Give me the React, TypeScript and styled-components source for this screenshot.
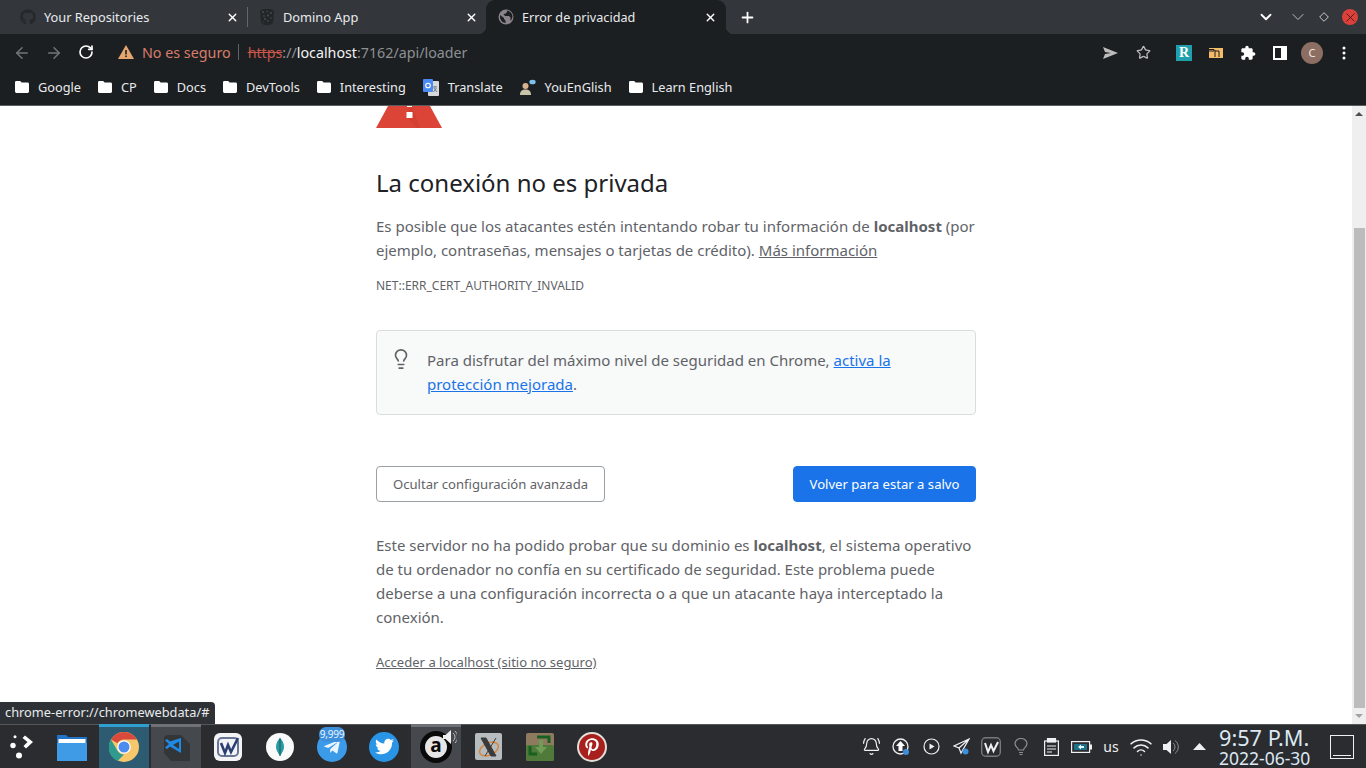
import React from 'react';
import styled, { createGlobalStyle } from 'styled-components';
import { ArrowLeft, ArrowRight, RotateCw, Star, X, Plus, ChevronDown, Lightbulb, BellRing, Wifi } from 'lucide-react';
import { FaGithub, FaTwitter, FaPinterestP, FaTelegramPlane } from 'react-icons/fa';

const Global = createGlobalStyle`
  html, body { margin: 0; padding: 0; overflow: hidden; background: #fff; }
  * { box-sizing: border-box; }
  body { font-family: "Noto Sans", "Open Sans", sans-serif; }
`;

const Screen = styled.div`
  position: relative; width: 1366px; height: 768px; display: flex; flex-direction: column; overflow: hidden;
`;
const TabStrip = styled.div`
  height: 34px; background: #33373c; display: flex; align-items: stretch; flex: none; color: #e8eaed;
`;
const Tab = styled.div<{ $active?: boolean; $width: number; $flush?: boolean }>`
  position: relative; width: ${p => p.$width}px; display: flex; align-items: center; padding-left: ${p => p.$flush ? 0 : 20}px; font-size: ${p => p.$active ? 12.65 : 12.8}px;
  ${p => p.$active ? `
    background: #1c1f21; border-radius: 9px 9px 0 0; padding-left: 12px;
    &::before, &::after { content: ''; position: absolute; bottom: 0; width: 8px; height: 8px; background: radial-gradient(circle at var(--c), transparent 8px, #1c1f21 8.5px); }
    &::before { left: -8px; --c: 0 0; }
    &::after { right: -8px; --c: 100% 0; }
  ` : ''}
`;
const TabDivider = styled.div`
  width: 1px; height: 20px; background: #62666b; align-self: center; margin: 0 11px 0 0; flex: none;
`;
const TabTitle = styled.span`
  margin-left: 8px; flex: 1; white-space: nowrap;
`;
const TabClose = styled.span<{ $right?: number }>`
  display: flex; margin-right: ${p => p.$right ?? 8}px; color: #fff;
`;
const NewTab = styled.div`
  display: flex; align-items: center; margin-left: 13px; color: #fff;
`;
const WindowControls = styled.div`
  margin-left: auto; display: flex; align-items: center;
`;
const WinButton = styled.span<{ $w: number }>`
  display: flex; width: ${p => p.$w}px; justify-content: center; align-items: center;
`;
const CloseCircle = styled.span`
  width: 16px; height: 16px; border-radius: 50%; background: #d9413a; display: flex; align-items: center; justify-content: center; color: #2c1210;
`;
const Toolbar = styled.div`
  height: 36px; background: #1c1f21; display: flex; align-items: center; flex: none; position: relative;
`;
const NavSlot = styled.span<{ $w: number; $color: string }>`
  width: ${p => p.$w}px; display: flex; justify-content: center; color: ${p => p.$color}; flex: none;
`;
const NavRow = styled.div`
  display: flex; padding: 1px 0 0 6px; width: 118px; flex: none;
`;
const Warn = styled.span`
  display: flex; width: 16px; flex: none;
`;
const SecurityText = styled.span`
  margin-left: 8px; color: #d87c6b; font-size: 14.3px; white-space: nowrap;
`;
const UrlDivider = styled.span`
  width: 1px; height: 16px; background: #5f6368; margin: 0 9px 0 7px; flex: none;
`;
const Url = styled.span`
  font-size: 14.25px; color: #8d9094; white-space: nowrap;
`;
const Strike = styled.span`
  color: #c9564a; text-decoration: line-through;
`;
const Host = styled.span`
  color: #f1f3f4;
`;
const ToolRight = styled.div`
  margin-left: auto; display: flex; align-items: center; padding: 1px 6px 0 0;
`;
const ToolSlot = styled.span<{ $w: number }>`
  width: ${p => p.$w}px; display: flex; justify-content: center; align-items: center; color: #fff; flex: none;
`;
const ToolGap = styled.span`
  width: 8px; flex: none;
`;
const RBadge = styled.span`
  width: 16px; height: 16px; background: #20a0ad; color: #fff; font: 700 14px/16px "Liberation Serif", serif; text-align: center;
`;
const Avatar = styled.span`
  width: 22px; height: 22px; border-radius: 50%; background: #8d6e63; color: #f3e9e5; font-size: 11px; display: flex; align-items: center; justify-content: center;
`;
const Bookmarks = styled.div`
  height: 36px; background: #1c1f21; border-bottom: 1px solid #5a5c5e; padding: 0 0 1px 15px; display: flex; align-items: center; gap: 17px; flex: none; color: #e8eaed; font-size: 12.75px;
`;
const Bookmark = styled.span`
  display: flex; align-items: center; gap: 9px; white-space: nowrap;
`;
const Body = styled.div`
  flex: 1; display: flex; min-height: 0; background: #fff;
`;
const Page = styled.main`
  flex: 1; overflow: hidden; padding-left: 376px;
`;
const Content = styled.div`
  width: 600px; color: #5f6368; font-size: 15px; line-height: 24px;
`;
const ErrorIcon = styled.svg`
  display: block; width: 66px; height: 22px;
`;
const Heading = styled.h1`
  margin: 37px 0 0; font-size: 24px; line-height: 36px; font-weight: 400; color: #202124;
`;
const Para = styled.p<{ $top: number }>`
  margin: ${p => p.$top}px 0 0; white-space: nowrap;
`;
const Strong = styled.b`
  font-weight: 700;
`;
const DarkLink = styled.a`
  color: #5f6368; text-decoration: underline;
`;
const Code = styled.div`
  margin-top: 12px; font-size: 12px; line-height: 24px; color: #5f6368;
`;
const Callout = styled.div`
  margin-top: 32px; height: 85px; border: 1px solid #dadce0; border-radius: 4px; background: #f8f9f9; padding: 17px 0 0 50px; position: relative; white-space: nowrap;
`;
const CalloutIcon = styled.span`
  position: absolute; left: 13px; top: 17px; display: flex; color: #5f6368;
`;
const BlueLink = styled.a`
  color: #1a73e8; text-decoration: underline;
`;
const Buttons = styled.div`
  margin-top: 51px; display: flex; justify-content: space-between;
`;
const Button = styled.div<{ $primary?: boolean }>`
  height: 36px; border-radius: 4px; font-size: 13.1px; display: flex; align-items: center; justify-content: center;
  width: ${p => p.$primary ? 183 : 229}px;
  padding-bottom: ${p => p.$primary ? 1 : 0}px;
  background: ${p => p.$primary ? '#1a73e8' : '#fff'};
  color: ${p => p.$primary ? '#fff' : '#5f6368'};
  border: 1px solid ${p => p.$primary ? '#1a73e8' : '#9aa0a6'};
`;
const ProceedLink = styled.a`
  display: block; margin-top: 21px; font-size: 13.05px; line-height: 24px; color: #5f6368; text-decoration: underline;
`;
const Scrollbar = styled.div`
  width: 14px; flex: none; background: #efefef; display: flex; flex-direction: column; align-items: center; padding: 0 1px;
`;
const ScrollUp = styled.span`
  width: 0; height: 0; border-left: 4px solid transparent; border-right: 4px solid transparent; border-bottom: 4px solid #505050; margin: 6px 0 112px;
`;
const ScrollThumb = styled.div`
  width: 11px; height: 480px; background: #bcbcbc;
`;
const ScrollDown = styled.span`
  width: 0; height: 0; border-left: 4px solid transparent; border-right: 4px solid transparent; border-top: 4px solid #a3a3a3; margin-top: 6px;
`;
const StatusBubble = styled.div`
  position: absolute; left: 0; top: 702px; width: 215px; height: 22px; background: #2e3236; color: #e8eaed; border-radius: 0 4px 0 0; font-size: 12.8px; line-height: 21px; padding-left: 5px; white-space: nowrap;
`;
const Taskbar = styled.footer`
  height: 44px; flex: none; background: #2b2c30; border-top: 1px solid #55575a; display: flex; align-items: stretch; color: #eff0f1;
`;
const TaskItem = styled.div<{ $state?: 'focus' | 'open'; $w?: number }>`
  width: ${p => p.$w ?? 52}px; ${p => p.$w ? 'padding-right: 4px;' : ''} flex: none; display: flex; align-items: center; justify-content: center; position: relative;
  ${p => p.$state === 'focus' ? `background: linear-gradient(#2d5c72, #2d5c72) 1px 0/50px 100% no-repeat;
    &::before { content:''; position:absolute; left:1px; width:50px; top:-1px; height:3px; background:#2e9fd0; }` : ''}
  ${p => p.$state === 'open' ? `background: linear-gradient(#45484c, #45484c) 1px 0/50px 100% no-repeat;
    &::before { content:''; position:absolute; left:1px; width:50px; top:-1px; height:3px; background:#6e7175; }` : ''}
`;
const CountBadge = styled.span`
  position: absolute; left: 13px; top: 2px; height: 15px; width: 26px; border-radius: 7px; background: #3d8fdc; color: #eaf4fc; font-size: 10px; line-height: 14px; text-align: center; letter-spacing: -.2px;
`;
const AudioDisc = styled.span`
  width: 32px; height: 32px; border-radius: 50%; border: 5px solid #0a0a0a; background: #e6e6e6; color: #0a0a0a; font-size: 19px; font-weight: 700; line-height: 19px; display: flex; align-items: center; justify-content: center; padding-bottom: 2px;
`;
const AudioSpeaker = styled.span`
  position: absolute; left: 33px; top: 5px; display: flex;
`;
const Tray = styled.div`
  margin-left: auto; display: flex; align-items: center;
`;
const TraySlot = styled.span<{ $w?: number }>`
  width: ${p => p.$w ?? 30}px; display: flex; justify-content: center; align-items: center; flex: none; font-size: 14px; color: #eff0f1;
`;
const Clock = styled.div`
  width: 118px; padding-left: 7px; display: flex; flex-direction: column; align-items: flex-start; white-space: nowrap; color: #dce8f2;
`;
const ClockTime = styled.span`
  font-size: 21.7px; line-height: 22px;
`;
const ClockDate = styled.span`
  font-size: 17.5px; line-height: 18px;
`;
const ShowDesktop = styled.div`
  width: 24px; height: 24px; border: 1px solid #eff0f1; margin-right: 12px; position: relative; align-self: center;
  &::after { content: ''; position: absolute; left: 2px; right: 2px; bottom: 2px; height: 1px; background: #eff0f1; }
`;
const CircleIcon = styled.span<{ $bg: string; $border?: string }>`
  width: 30px; height: 30px; border-radius: 50%; background: ${p => p.$bg}; display: flex; align-items: center; justify-content: center; ${p => p.$border ? `border: 2px solid ${p.$border};` : ''}
`;

const Folder = () => (
  <svg width="14" height="12" viewBox="0 0 14 12"><path d="M1.4 0H5.2L6.6 1.6H12.6A1.4 1.4 0 0 1 14 3V10.6A1.4 1.4 0 0 1 12.6 12H1.4A1.4 1.4 0 0 1 0 10.6V1.4A1.4 1.4 0 0 1 1.4 0Z" fill="#fff" /></svg>
);
const Globe = () => (
  <svg width="16" height="16" viewBox="0 0 16 16"><circle cx="8" cy="8" r="7.5" fill="#8a8488" /><path d="M2 6l4 3 0 1 1.5 1.5V14C5 14 2 11 2 8zM9.5 1.5L8 4.5 5.5 5 7 7h4l1.5 1.5v3.5C14 10 15 8 14 5.5 13 3 11 2 9.5 1.5z" fill="#1c1f21" /></svg>
);
const Domino = () => (
  <svg width="16" height="16" viewBox="0 0 16 16"><path d="M1 2l3-2h8l3 2-1 12-3 2H5l-3-2z" fill="#232629" /><g fill="#4e5154"><circle cx="4" cy="3" r=".9" /><circle cx="8" cy="2.500" r=".7" /><circle cx="12" cy="4" r=".9" /><circle cx="5" cy="7" r=".8" /><circle cx="9" cy="6.500" r=".9" /><circle cx="12" cy="9" r=".7" /><circle cx="6" cy="10" r=".9" /><circle cx="9" cy="12" r=".8" /><circle cx="4" cy="13" r=".6" /></g></svg>
);
const Warning = () => (
  <svg width="16" height="14" viewBox="0 0 16 14"><path d="M8 0l8 14H0z" fill="#e6a66f" /><rect x="7.2" y="5" width="1.6" height="4.5" fill="#1c1f21" /><rect x="7.2" y="10.5" width="1.6" height="1.6" fill="#1c1f21" /></svg>
);
const TranslateIcon = () => (
  <svg width="16" height="17" viewBox="0 0 16 17"><rect x="5" y="2" width="11" height="15" rx="1" fill="#d6d8da" /><rect width="10" height="13" rx="1" fill="#4a8af4" /><circle cx="5" cy="6.5" r="2.3" fill="none" stroke="#fff" strokeWidth="1.1" /><path d="M10 8h4M12 7v1M10.5 13l3-4M11 9l3 4" stroke="#6b6f73" strokeWidth=".9" /></svg>
);
const YouEnGlishIcon = () => (
  <svg width="16" height="17" viewBox="0 0 16 17"><circle cx="5.5" cy="7" r="3" fill="#d8b48c" /><path d="M0 16c0-4 2-5.500 5.500-5.500S11 12 11 16z" fill="#c9c3a8" /><ellipse cx="12.500" cy="3" rx="3.200" ry="2.300" fill="#7cc0ec" /></svg>
);
const SendArrow = () => (
  <svg width="15" height="12" viewBox="0 0 15 12"><path d="M0 0l15 6L0 12l2-5 6-1-6-1z" fill="#bdbdbd" /></svg>
);
const Puzzle = () => (
  <svg width="16" height="16" viewBox="0 0 24 24"><path d="M20.500 11H19V7c0-1.100-.9-2-2-2h-4V3.500C13 2.120 11.880 1 10.500 1S8 2.120 8 3.500V5H4c-1.100 0-1.990.9-1.990 2v3.800H3.500c1.490 0 2.700 1.210 2.700 2.700s-1.210 2.700-2.700 2.700H2V20c0 1.100.9 2 2 2h3.800v-1.500c0-1.490 1.210-2.700 2.700-2.700 1.490 0 2.700 1.210 2.700 2.700V22H17c1.100 0 2-.9 2-2v-4h1.500c1.380 0 2.500-1.120 2.500-2.500S21.880 11 20.500 11z" fill="#fff" /></svg>
);
const SidePanel = () => (
  <svg width="14" height="14" viewBox="0 0 14 14"><rect width="14" height="14" fill="#fff" /><rect x="2" y="2" width="6" height="10" fill="#1c1f21" /></svg>
);
const Keep = () => (
  <svg width="14" height="10" viewBox="0 0 14 10"><rect width="14" height="10" fill="#f5bb69" /><path d="M0 1.500h5V3H0M6 2v7M6 3h4v6" stroke="#1c1f21" strokeWidth="1" fill="none" /></svg>
);
const Dots = () => (
  <svg width="4" height="14" viewBox="0 0 4 14"><circle cx="2" cy="2" r="1.500" fill="#fff" /><circle cx="2" cy="7" r="1.500" fill="#fff" /><circle cx="2" cy="12" r="1.500" fill="#fff" /></svg>
);
const Diamond = () => (
  <svg width="10" height="10" viewBox="0 0 10 10"><path d="M5 .7L9.300 5 5 9.300.7 5z" fill="none" stroke="#c8c9ca" strokeWidth="1" /></svg>
);
const Launcher = () => (
  <svg width="24" height="24" viewBox="0 0 24 24" fill="#fff"><path d="M16 .5l8 6.500-7 6.500-2.500-2.500 4-4-5-4z" /><circle cx="6" cy="1.800" r="1.500" /><circle cx="4" cy="10.500" r="2.700" /><circle cx="10" cy="20.500" r="3" /></svg>
);
const Files = () => (
  <svg width="30" height="28" viewBox="0 0 30 28"><path d="M0 2h9l2 2h19v24H0z" fill="#2274c9" /><rect x="1.500" y="6" width="27" height="4" fill="#fff" /><rect x="0" y="10" width="30" height="18" fill="#3f9be6" /></svg>
);
const Chrome = () => (
  <svg width="30" height="30" viewBox="0 0 30 30">
    <circle cx="15" cy="15" r="15" fill="#f6c86b" />
    <path d="M15 0A15 15 0 0 1 28 7.500H15A7.500 7.500 0 0 0 8.500 11.200L2 7.500A15 15 0 0 1 15 0Z" fill="#d9493c" />
    <path d="M2 7.500L8.500 18.800A7.500 7.500 0 0 0 15 22.500L8.500 29A15 15 0 0 1 2 7.500Z" fill="#2f9b8f" />
    <circle cx="15" cy="15" r="6.800" fill="#fff" /><circle cx="15" cy="15" r="5.500" fill="#4c8bf0" />
  </svg>
);
const VSCode = () => (
  <svg width="28" height="28" viewBox="0 0 28 28"><path d="M5 2h14l9 9v17H9L2 20V4z" fill="#333639" /><path d="M19 5v15L8 13.500l-3 2.500-2-1.500 4-3.500-4-3.500 2-1.500 3 2.500zM17 8.500L11 12l6 4z" fill="#1f8ae6" /></svg>
);
const Wps = () => (
  <svg width="28" height="28" viewBox="0 0 28 28"><rect width="28" height="28" rx="6" fill="#f4f4f6" /><rect x="4" y="5" width="20" height="18" rx="4" fill="none" stroke="#6a7794" strokeWidth="2" /><path d="M7 10l4 10 3-8 3 7 7-14" fill="none" stroke="#2c3f73" strokeWidth="2.600" /></svg>
);
const Mongo = () => (
  <svg width="28" height="28" viewBox="0 0 28 28"><circle cx="14" cy="14" r="14" fill="#fafafa" /><path d="M14 5c3 3 4 6 4 9s-2 6-4 9c-2-3-4-6-4-9s1-6 4-9z" fill="#2a9aa0" /><path d="M14 5v18" stroke="#0f5f65" /></svg>
);
const Speaker = () => (
  <svg width="14" height="14" viewBox="0 0 14 14"><path d="M0 5h2.500L8 0v14L2.500 9H0z" fill="#f0f0f0" /><path d="M10 3a5 5 0 0 1 0 8M12 1a8 8 0 0 1 0 12" fill="none" stroke="#bbb" /></svg>
);
const XIcon = () => (
  <svg width="27" height="27" viewBox="0 0 27 27"><rect width="27" height="27" rx="2" fill="#b7bcbe" /><ellipse cx="14" cy="16" rx="10" ry="6" fill="none" stroke="#d9853d" strokeWidth="1.500" transform="rotate(-25 14 16)" /><path d="M6 5h5l10 18h-5zM21 5L10 23" fill="#3a3a3a" stroke="#3a3a3a" /></svg>
);
const Uget = () => (
  <svg width="28" height="28" viewBox="0 0 28 28"><rect width="28" height="28" rx="2" fill="#8f7a5f" /><rect y="12" width="28" height="16" rx="2" fill="#4f7a3a" /><path d="M4 13v8h7M11 4h12v6" stroke="#176020" strokeWidth="3" fill="none" /><path d="M13 7h4v7h4l-6 7-6-7h4z" fill="#709c58" /></svg>
);
const Bulb = () => (
  <svg width="14" height="18" viewBox="0 0 14 18" fill="none" stroke="#8c8e91" strokeWidth="1.200"><path d="M4.500 12c0-2-3.500-3-3.500-6.500a6 5 0 0 1 12 0c0 3.500-3.500 4.500-3.500 6.500z" /><path d="M5 14.500h4M5.500 16.500h3" /></svg>
);
const Upload = () => (
  <svg width="20" height="20" viewBox="0 0 20 20"><circle cx="9.500" cy="9.500" r="7.500" fill="none" stroke="#eff0f1" strokeWidth="1.300" /><path d="M9.500 4l4.500 5h-2.500v5h-4V9H5z" fill="#fff" /><circle cx="15" cy="15" r="3" fill="#3d8fdc" /></svg>
);
const PlayCircle = () => (
  <svg width="17" height="17" viewBox="0 0 17 17"><circle cx="8.500" cy="8.500" r="7.500" fill="none" stroke="#eff0f1" strokeWidth="1.200" /><path d="M6.500 5.500l5 3-5 3z" fill="#eff0f1" /></svg>
);
const PaperPlane = () => (
  <svg width="17" height="17" viewBox="0 0 17 17"><path d="M16 1L1 8l5 2 2 5zM6 10L16 1" fill="none" stroke="#eff0f1" strokeWidth="1.200" /><circle cx="12.500" cy="13.500" r="3" fill="#3d8fdc" /></svg>
);
const TrayCheck = () => (
  <svg width="20" height="20" viewBox="0 0 20 20"><rect x=".7" y=".7" width="18.600" height="18.600" rx="4" fill="none" stroke="#77797c" strokeWidth="1.400" /><path d="M4 6l3 9 3-7 2.500 6L17 5" fill="none" stroke="#eff0f1" strokeWidth="2" /></svg>
);
const ClipboardIcon = () => (
  <svg width="15" height="18" viewBox="0 0 15 18" fill="none" stroke="#eff0f1" strokeWidth="1.200"><rect x=".6" y="3" width="13.800" height="14.400" /><rect x="3.500" y=".5" width="8" height="3.500" fill="#eff0f1" /><path d="M3 8h9M3 11h9M3 14h5" /></svg>
);
const Battery = () => (
  <svg width="21" height="12" viewBox="0 0 21 12"><rect x=".6" y=".6" width="18" height="10.800" fill="none" stroke="#eff0f1" strokeWidth="1.200" /><rect x="19" y="3.500" width="2" height="5" fill="#eff0f1" /><rect x="3" y="3" width="13" height="6" fill="#1f6f86" /><path d="M7 6l3-2.500V5h3v2h-3v1.500z" fill="#dff" /></svg>
);
const Volume = () => (
  <svg width="17" height="16" viewBox="0 0 17 16"><path d="M0 5h3.500L8 1v14l-4.500-4H0z" fill="#eff0f1" /><path d="M10 4a5 5 0 0 1 0 8M12 1.500a8 8 0 0 1 0 13" fill="none" stroke="#8c8e91" /></svg>
);
const Triangle = () => (
  <svg width="13" height="7" viewBox="0 0 13 7"><path d="M6.500 0L13 7H0z" fill="#eff0f1" /></svg>
);

export default function App() {
  return (
    <Screen>
      <Global />
      <TabStrip>
        <Tab $width={247}>
          <FaGithub size={16} color="#26292c" />
          <TabTitle>Your Repositories</TabTitle>
          <TabClose><X size={13} strokeWidth={2.500} /></TabClose>
        </Tab>
        <TabDivider />
        <Tab $width={227} $flush>
          <Domino />
          <TabTitle>Domino App</TabTitle>
          <TabClose><X size={13} strokeWidth={2.500} /></TabClose>
        </Tab>
        <Tab $width={240} $active>
          <Globe />
          <TabTitle>Error de privacidad</TabTitle>
          <TabClose $right={9}><X size={13} strokeWidth={2.500} /></TabClose>
        </Tab>
        <NewTab><Plus size={17} strokeWidth={2.500} /></NewTab>
        <WindowControls>
          <WinButton $w={32}><ChevronDown size={18} color="#fff" strokeWidth={2.400} /></WinButton>
          <WinButton $w={32}><ChevronDown size={20} color="#c8c9ca" strokeWidth={1.100} /></WinButton>
          <WinButton $w={20}><Diamond /></WinButton>
          <WinButton $w={32}><CloseCircle><X size={15} strokeWidth={1.200} /></CloseCircle></WinButton>
        </WindowControls>
      </TabStrip>
      <Toolbar>
        <NavRow>
          <NavSlot $w={32} $color="#72757a"><ArrowLeft size={18} strokeWidth={2} /></NavSlot>
          <NavSlot $w={32} $color="#72757a"><ArrowRight size={18} strokeWidth={2} /></NavSlot>
          <NavSlot $w={32} $color="#fff"><RotateCw size={16} strokeWidth={2.500} /></NavSlot>
        </NavRow>
        <Warn><Warning /></Warn>
        <SecurityText>No es seguro</SecurityText>
        <UrlDivider />
        <Url><Strike>https</Strike>://<Host>localhost</Host>:7162/api/loader</Url>
        <ToolRight>
          <ToolSlot $w={33}><SendArrow /></ToolSlot>
          <ToolSlot $w={33}><Star size={15} color="#bdbdbd" strokeWidth={2} /></ToolSlot>
          <ToolGap />
          <ToolSlot $w={32}><RBadge>R</RBadge></ToolSlot>
          <ToolSlot $w={32}><Keep /></ToolSlot>
          <ToolSlot $w={32}><Puzzle /></ToolSlot>
          <ToolSlot $w={32}><SidePanel /></ToolSlot>
          <ToolSlot $w={32}><Avatar>C</Avatar></ToolSlot>
          <ToolSlot $w={32}><Dots /></ToolSlot>
        </ToolRight>
      </Toolbar>
      <Bookmarks>
        {['Google', 'CP', 'Docs', 'DevTools', 'Interesting'].map(n => (
          <Bookmark key={n}><Folder />{n}</Bookmark>
        ))}
        <Bookmark><TranslateIcon />Translate</Bookmark>
        <Bookmark><YouEnGlishIcon />YouEnGlish</Bookmark>
        <Bookmark><Folder />Learn English</Bookmark>
      </Bookmarks>
      <Body>
        <Page>
          <Content>
            <ErrorIcon viewBox="0 0 66 22">
              <path d="M12 0H54L66 22H0z" fill="#db4437" />
              <path d="M33 14l8 8H44L36 0h-3z" fill="#c53929" opacity=".35" />
              <rect x="31" y="0" width="5" height="1" fill="#fff" />
              <rect x="30.500" y="6" width="6" height="6" fill="#fff" />
            </ErrorIcon>
            <Heading>La conexión no es privada</Heading>
            <Para $top={13}>
              Es posible que los atacantes estén intentando robar tu información de <Strong>localhost</Strong> (por<br />
              ejemplo, contraseñas, mensajes o tarjetas de crédito). <DarkLink>Más información</DarkLink>
            </Para>
            <Code>NET::ERR_CERT_AUTHORITY_INVALID</Code>
            <Callout>
              <CalloutIcon><Lightbulb size={22} strokeWidth={1.800} /></CalloutIcon>
              Para disfrutar del máximo nivel de seguridad en Chrome, <BlueLink>activa la</BlueLink><br />
              <BlueLink>protección mejorada</BlueLink>.
            </Callout>
            <Buttons>
              <Button>Ocultar configuración avanzada</Button>
              <Button $primary>Volver para estar a salvo</Button>
            </Buttons>
            <Para $top={31}>
              Este servidor no ha podido probar que su dominio es <Strong>localhost</Strong>, el sistema operativo<br />
              de tu ordenador no confía en su certificado de seguridad. Este problema puede<br />
              deberse a una configuración incorrecta o a que un atacante haya interceptado la<br />
              conexión.
            </Para>
            <ProceedLink>Acceder a localhost (sitio no seguro)</ProceedLink>
          </Content>
        </Page>
        <Scrollbar>
          <ScrollUp />
          <ScrollThumb />
          <ScrollDown />
        </Scrollbar>
      </Body>
      <StatusBubble>chrome-error://chromewebdata/#</StatusBubble>
      <Taskbar>
        <TaskItem $w={46}><Launcher /></TaskItem>
        <TaskItem><Files /></TaskItem>
        <TaskItem $state="focus"><Chrome /></TaskItem>
        <TaskItem $state="open"><VSCode /></TaskItem>
        <TaskItem><Wps /></TaskItem>
        <TaskItem><Mongo /></TaskItem>
        <TaskItem><CircleIcon $bg="#3b9be8"><FaTelegramPlane size={18} color="#eaf5fd" /></CircleIcon><CountBadge>9,999</CountBadge></TaskItem>
        <TaskItem><CircleIcon $bg="#2a94e6"><FaTwitter size={19} color="#fff" /></CircleIcon></TaskItem>
        <TaskItem $state="open"><AudioDisc>a</AudioDisc><AudioSpeaker><Speaker /></AudioSpeaker></TaskItem>
        <TaskItem><XIcon /></TaskItem>
        <TaskItem><Uget /></TaskItem>
        <TaskItem><CircleIcon $bg="#a8201e" $border="#e5dfdc"><FaPinterestP size={18} color="#fff" /></CircleIcon></TaskItem>
        <Tray>
          <TraySlot><BellRing size={19} strokeWidth={1.500} /></TraySlot>
          <TraySlot><Upload /></TraySlot>
          <TraySlot><PlayCircle /></TraySlot>
          <TraySlot><PaperPlane /></TraySlot>
          <TraySlot><TrayCheck /></TraySlot>
          <TraySlot><Bulb /></TraySlot>
          <TraySlot><ClipboardIcon /></TraySlot>
          <TraySlot><Battery /></TraySlot>
          <TraySlot>us</TraySlot>
          <TraySlot><Wifi size={24} strokeWidth={1.500} /></TraySlot>
          <TraySlot><Volume /></TraySlot>
          <TraySlot $w={26}><Triangle /></TraySlot>
          <Clock>
            <ClockTime>9:57 P.M.</ClockTime>
            <ClockDate>2022-06-30</ClockDate>
          </Clock>
          <ShowDesktop />
        </Tray>
      </Taskbar>
    </Screen>
  );
}
